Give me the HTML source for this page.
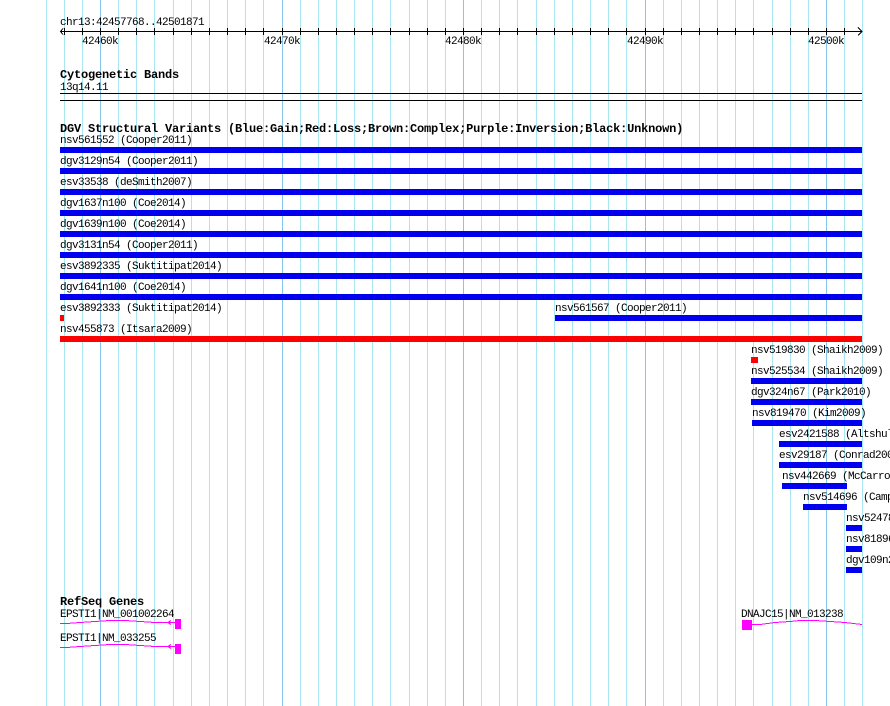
<!DOCTYPE html>
<html><head><meta charset="utf-8"><style>
html,body{margin:0;padding:0;background:#fff;width:890px;height:706px;overflow:hidden}
svg{display:block}
text{font-family:"Liberation Mono","DejaVu Sans Mono",monospace;font-size:11px;letter-spacing:-0.6px;fill:#000}
.b{font-weight:bold;font-size:12px;letter-spacing:-0.2px}
</style></head><body>
<svg width="890" height="706" viewBox="0 0 890 706" xmlns="http://www.w3.org/2000/svg" shape-rendering="crispEdges">
<path stroke="#a8e6f2" stroke-width="1" d="M46.5 0V706M64.5 0V706M82.5 0V706M118.5 0V706M136.5 0V706M154.5 0V706M173.5 0V706M191.5 0V706M209.5 0V706M227.5 0V706M245.5 0V706M263.5 0V706M300.5 0V706M318.5 0V706M336.5 0V706M354.5 0V706M372.5 0V706M390.5 0V706M409.5 0V706M427.5 0V706M445.5 0V706M481.5 0V706M499.5 0V706M517.5 0V706M536.5 0V706M554.5 0V706M572.5 0V706M590.5 0V706M608.5 0V706M626.5 0V706M663.5 0V706M681.5 0V706M699.5 0V706M717.5 0V706M735.5 0V706M753.5 0V706M772.5 0V706M790.5 0V706M808.5 0V706M844.5 0V706M862.5 0V706"/>
<path stroke="#86c6e8" stroke-width="1" d="M100.5 0V706M282.5 0V706M463.5 0V706M645.5 0V706M826.5 0V706"/>
<text x="60" y="25">chr13:42457768..42501871</text>
<path stroke="#000" fill="none" d="M60 31.5H862M64.5 28V35M82.5 28V35M100.5 28V35M118.5 28V35M136.5 28V35M154.5 28V35M173.5 28V35M191.5 28V35M209.5 28V35M227.5 28V35M245.5 28V35M263.5 28V35M282.5 28V35M300.5 28V35M318.5 28V35M336.5 28V35M354.5 28V35M372.5 28V35M390.5 28V35M409.5 28V35M427.5 28V35M445.5 28V35M463.5 28V35M481.5 28V35M499.5 28V35M517.5 28V35M536.5 28V35M554.5 28V35M572.5 28V35M590.5 28V35M608.5 28V35M626.5 28V35M645.5 28V35M663.5 28V35M681.5 28V35M699.5 28V35M717.5 28V35M735.5 28V35M753.5 28V35M772.5 28V35M790.5 28V35M808.5 28V35M826.5 28V35M844.5 28V35M63 28.5L60.5 31.5L63 34.5M858 27.5L862 31.5L858 35.5"/>
<text x="82" y="44">42460k</text><text x="264" y="44">42470k</text><text x="445" y="44">42480k</text><text x="627" y="44">42490k</text><text x="808" y="44">42500k</text>
<text class="b" x="60" y="78">Cytogenetic Bands</text>
<text x="60" y="90">13q14.11</text>
<path stroke="#000" d="M60 93.5H862M60 100.5H862"/>
<text class="b" x="60" y="132">DGV Structural Variants (Blue:Gain;Red:Loss;Brown:Complex;Purple:Inversion;Black:Unknown)</text>
<g fill="#0000ee">
<rect x="60" y="147" width="802" height="6"/><rect x="60" y="168" width="802" height="6"/><rect x="60" y="189" width="802" height="6"/><rect x="60" y="210" width="802" height="6"/><rect x="60" y="231" width="802" height="6"/><rect x="60" y="252" width="802" height="6"/><rect x="60" y="273" width="802" height="6"/><rect x="60" y="294" width="802" height="6"/>
<rect x="555" y="315" width="307" height="6"/>
<rect x="751" y="378" width="111" height="6"/><rect x="751" y="399" width="111" height="6"/><rect x="752" y="420" width="110" height="6"/><rect x="779" y="441" width="83" height="6"/><rect x="779" y="462" width="83" height="6"/><rect x="782" y="483" width="65" height="6"/><rect x="803" y="504" width="44" height="6"/><rect x="846" y="525" width="16" height="6"/><rect x="846" y="546" width="16" height="6"/><rect x="846" y="567" width="16" height="6"/>
</g>
<g fill="#ff0000"><rect x="60" y="315" width="4" height="6"/><rect x="60" y="336" width="802" height="6"/><rect x="751" y="357" width="7" height="6"/></g>
<text x="60" y="143">nsv561552 (Cooper2011)</text>
<text x="60" y="164">dgv3129n54 (Cooper2011)</text>
<text x="60" y="185">esv33538 (deSmith2007)</text>
<text x="60" y="206">dgv1637n100 (Coe2014)</text>
<text x="60" y="227">dgv1639n100 (Coe2014)</text>
<text x="60" y="248">dgv3131n54 (Cooper2011)</text>
<text x="60" y="269">esv3892335 (Suktitipat2014)</text>
<text x="60" y="290">dgv1641n100 (Coe2014)</text>
<text x="60" y="311">esv3892333 (Suktitipat2014)</text>
<text x="555" y="311">nsv561567 (Cooper2011)</text>
<text x="60" y="332">nsv455873 (Itsara2009)</text>
<text x="751" y="353">nsv519830 (Shaikh2009)</text>
<text x="751" y="374">nsv525534 (Shaikh2009)</text>
<text x="751" y="395">dgv324n67 (Park2010)</text>
<text x="752" y="416">nsv819470 (Kim2009)</text>
<text x="779" y="437">esv2421588 (Altshuler2010)</text>
<text x="779" y="458">esv29187 (Conrad2009)</text>
<text x="782" y="479">nsv442669 (McCarroll2008)</text>
<text x="803" y="500">nsv514696 (Campbell2011)</text>
<text x="846" y="521">nsv524780</text>
<text x="846" y="542">nsv818960</text>
<text x="846" y="563">dgv109n21</text>
<text class="b" x="60" y="605">RefSeq Genes</text>
<text x="60" y="617">EPSTI1|NM_001002264</text>
<text x="60" y="641">EPSTI1|NM_033255</text>
<text x="741" y="617">DNAJC15|NM_013238</text>
<g fill="none" stroke="#ff00ff" stroke-width="1">
<path d="M60 623.5H67L80 622.5L95 621.5L110 620.5L125 620.5L140 621.5L155 622.5H175M171 620.5L168 622.5L171 624.5"/>
<path d="M60 647.5H67L80 646.5L95 645.5L110 644.5L125 644.5L140 645.5L155 646.5H175M171 644.5L168 646.5L171 648.5"/>
<path d="M751 624.5H760L775 622.5L790 621.5L800 620.5L815 620.5L830 621.5L845 622.5L862 624.5"/>
</g>
<g fill="#ff00ff"><rect x="175" y="619" width="6" height="10"/><rect x="175" y="644" width="6" height="10"/><rect x="742" y="620" width="10" height="10"/></g>
</svg>
</body></html>
